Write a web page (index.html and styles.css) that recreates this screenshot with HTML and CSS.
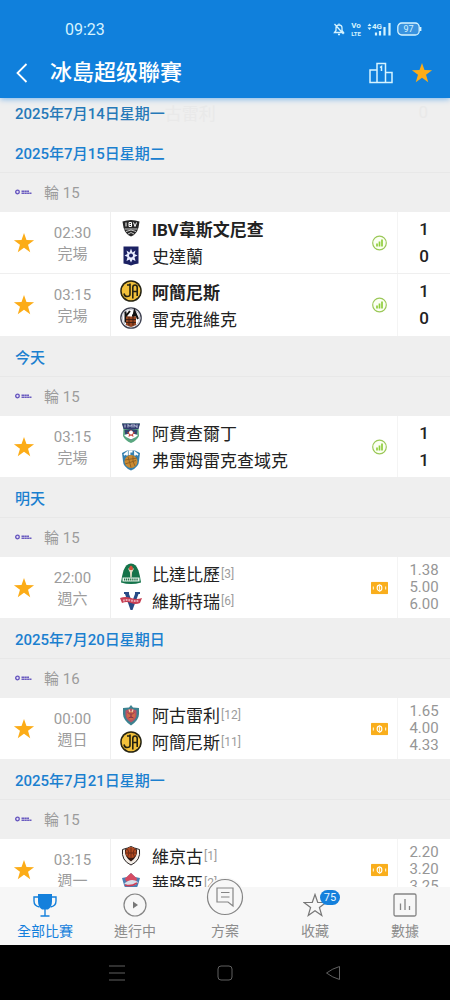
FILE: index.html
```
<!DOCTYPE html>
<html lang="zh-Hant">
<head>
<meta charset="UTF-8" />
<meta name="viewport" content="width=device-width, initial-scale=1.0" />
<title>冰島超级聯賽</title>
<link rel="stylesheet" href="styles.css">
</head>
<body>

<!-- shared icons and club badges -->
<svg class="sprite" aria-hidden="true">
    <symbol id="star" viewBox="0 0 24 24"><path d="M12 1l2.700 7.800 8.300.2-6.600 5 2.400 8L12 17.300 5.200 22l2.400-8L1 9l8.300-.2z"/></symbol>
    <symbol id="league" viewBox="0 0 17 6">
        <circle cx="2.500" cy="3" r="1.800" fill="#e4def5" stroke="#6352bd" stroke-width="1.300"/>
        <path d="M6.500 2.200h7.500M6.500 4.200h10" stroke="#6b5cc0" stroke-width="1.600" stroke-dasharray="2.500 .3"/>
    </symbol>
    <symbol id="stats" viewBox="0 0 16 16">
        <circle cx="8" cy="8" r="6.800" fill="#fbfff3" stroke="#9bc858" stroke-width="1.200"/>
        <path d="M5.500 11.500V8.500M8 11.500V6.500M10.500 11.500V4.500" stroke="#8fce3c" stroke-width="1.700"/>
    </symbol>
    <symbol id="cash" viewBox="0 0 18 13">
        <rect width="18" height="13" rx="1" fill="#f9ae1c"/>
        <ellipse cx="9" cy="6.500" rx="2.500" ry="3" fill="none" stroke="#fff" stroke-width="1.200"/>
        <path d="M9 2.500v8M2.500 5v3M15.500 5v3" stroke="#fff3d0" stroke-width="1.200"/>
    </symbol>
    <symbol id="ibv" viewBox="0 0 22 22">
        <path d="M2.500 3.500q8.500-3 17 0l-1 6q-2 7-7.500 9-5.500-2-7.500-9z" fill="#262626"/>
        <path d="M6 4.500v4M9 4.500v4h2.500v-4zM9 6.500h2.500M13.500 4.500l1.500 4 1.500-4" fill="none" stroke="#fff" stroke-width="1"/>
        <path d="M4.500 11h13M6 13.500l5-1.500 5 1.500M8 16l3-1.500 3 1.500" fill="none" stroke="#ddd" stroke-width=".9"/>
    </symbol>
    <symbol id="stjarnan" viewBox="0 0 22 22">
        <path d="M3.500 1.500h15v17q-4 .5-7.500 2-3.500-1.500-7.500-2z" fill="#1b2163"/>
        <path d="M11 3.500l1.500 4 3-2-1 3.500 3 1.500-3 1.500 1 4-3-1.500-1.500 3-1.500-3-3 1.500 1-4-3-1.500 3-1.500-1-3.500 3 2z" fill="#e9edff"/>
        <circle cx="11" cy="10.500" r="2" fill="#1b2163"/>
    </symbol>
    <symbol id="ia" viewBox="0 0 22 22">
        <circle cx="11" cy="11" r="10.800" fill="#252312"/>
        <circle cx="11" cy="11" r="9.300" fill="#f2c13b"/>
        <path d="M10 3.500v11q0 2-3 2-2.500 0-3-3M12.800 18.500V7.500q0-2.500 2.200-2.500t2.200 2.500V16M13 11.500h4M7 5h3" fill="none" stroke="#252312" stroke-width="1.600"/>
    </symbol>
    <symbol id="kr" viewBox="0 0 22 22">
        <circle cx="11" cy="11" r="10.200" fill="#fff" stroke="#3d4050" stroke-width="1.300"/>
        <circle cx="11" cy="11" r="8.600" fill="#fff" stroke="#8b8da0" stroke-width=".5"/>
        <path d="M5.500 4.500v11M10 4l-4 5 3 4M13 11l1.500-7 3.500 8M12 8.500h5" fill="none" stroke="#111" stroke-width="2"/>
        <path d="M6 9.500h10V18l-5 2-5-2z" fill="#9a4722"/>
        <path d="M6 12.500h10M6 15.500h10M9 9.500v9M13 9.500v9" stroke="#3b1d12" stroke-width=".9"/>
    </symbol>
    <symbol id="hafnar" viewBox="0 0 22 22">
        <path d="M2 1.500h18l-1.500 4.500.5 8q-2 4.500-8 7-6-2.500-8-7l.5-8z" fill="#5aa780"/>
        <path d="M2 1.500h18L18.500 7h-15z" fill="#333d70"/>
        <path d="M5 2.500v3M8 5.500v-3l2 2 2-2v3M14 5.500v-3l3 3v-3" fill="none" stroke="#e8ecff" stroke-width=".8"/>
        <path d="M4.500 8l6.500-1 6.500 1-1 6-5.500 4-5.500-4z" fill="#33436e"/>
        <path d="M4 13l7-2 7 2-2 2-5 2.500-5-2.500z" fill="#fff"/>
        <path d="M11 7.500l1.500 2.500 2.500.5-2 2 .5 2.500-2.500-1.500-2.500 1.500.5-2.500-2-2 2.500-.5z" fill="#c9473e"/>
        <circle cx="11" cy="10.500" r="2" fill="#fff"/>
    </symbol>
    <symbol id="fram" viewBox="0 0 22 22">
        <path d="M2 4l5-2.500h8L20 4l-1 8q0 6-8 9.500Q3 18 3 12z" fill="#337fae"/>
        <path d="M4 6l3-2.500v3M9.500 6V2.500h3M15 6.500v-3L18 6" fill="none" stroke="#fff" stroke-width="1.800"/>
        <circle cx="11" cy="12.500" r="6.500" fill="#c98a32"/>
        <path d="M5 11l12-2M5 15l11-3.500M8 7.500l3 11M13 7q-1 6 2 10" fill="none" stroke="#8b5d22" stroke-width=".9"/>
    </symbol>
    <symbol id="breida" viewBox="0 0 22 22">
        <path d="M11 .5q5 0 7.500 7 1.500 5 2.500 12-10 3-20 0 1-7 2.500-12Q6 .5 11 .5z" fill="#14734a"/>
        <path d="M8 5.500h6l-2 4-.3 5h-1.400l-.3-5z" fill="#e7dfc8"/>
        <path d="M11 2.500q3 2 1.500 4.500h-3Q8 4.500 11 2.500z" fill="#d4513b"/>
        <path d="M2.500 14.500h17v4h-17z" fill="#e4f2e9"/>
        <path d="M4 16.500h14" stroke="#24724b" stroke-width="2" stroke-dasharray="1.200 .7"/>
    </symbol>
    <symbol id="vestri" viewBox="0 0 22 22">
        <path d="M4 2h5v2l3 8 3-8V2h5v2h-1.500L12.500 20h-2L5 4H4z" fill="#274b86"/>
        <path d="M0 8q5.500-2 11 0t11 0l-2 5q-4.500 2-9 0t-9 0z" fill="#c63e52"/>
        <path d="M3 10.500q4-1 8 0t8 0" fill="none" stroke="#e9a8b4" stroke-width="2" stroke-dasharray="1.800 .9"/>
    </symbol>
    <symbol id="vikingurA" viewBox="0 0 22 22">
        <path d="M11 1l2 2.500 6 .5v6q0 6-8 11.500Q3 16 3 10V4l6-.5z" fill="#3c8290"/>
        <path d="M11 4.500l5.500 2V11q0 4-5.500 7.500Q5.500 15 5.500 11V6.500z" fill="#ba5362"/>
        <circle cx="11" cy="11.500" r="4.200" fill="#ce6a48"/>
        <path d="M8 8.500l2 2M14 8.500l-2 2M8.500 14q2.500-2 5 0M11 9v5" fill="none" stroke="#87304b" stroke-width="1"/>
        <path d="M9 5.500l1 2.500M13 5.500L12 8" stroke="#f3d8ac" stroke-width="1.200"/>
    </symbol>
    <symbol id="vikingurR" viewBox="0 0 22 22">
        <path d="M2.500 4.500l5-1.500L11 1.500 14.500 3l5 1.500q1.500 11-8.500 15.500Q1 15.500 2.500 4.500z" fill="#f4eee8" stroke="#272323" stroke-width="1"/>
        <path d="M5 4.500l3-1.500h6l3 1.500q1 7-6 12-7-5-6-12z" fill="#2d1813"/>
        <circle cx="11" cy="7.500" r="5.500" fill="#b34a20"/>
        <path d="M6 8h10M11 2.500v12M7.500 4q3 4 0 8M14.500 4q-3 4 0 8" fill="none" stroke="#5a2413" stroke-width=".8"/>
    </symbol>
    <symbol id="valur" viewBox="0 0 22 22">
        <path d="M2 6l5-1 4-4 4 4 5 1-2 7q-2 6-7 8-5-2-7-8z" fill="#4c7fb4"/>
        <path d="M5 6.500L11 1l6 5.500-1 3H6z" fill="#d64c63"/>
        <path d="M4 12q7-7 14-2-3 6-14 2z" fill="#d8dfea"/>
        <path d="M5 13q6 2 12-2" stroke="#cc3f57" stroke-width="1.600" fill="none"/>
    </symbol>
</svg>

<div class="app">
    <header class="header">
        <div class="status-bar">
            <span class="clock">09:23</span>
            <div class="status-icons">
                <svg width="12" height="14" viewBox="0 0 12 14" fill="none" stroke="#d5f3ff" stroke-width="1.300">
                    <path d="M1.500 10.500h9L9 8.500V6q0-3-3-3T3 6v2.500zM6 1.500V3M5 12.500h2M1.500 2l9 10"/>
                </svg>
                <svg width="10" height="14" viewBox="0 0 10 14">
                    <text x="5" y="6" font-size="8">Vo</text>
                    <text x="5" y="14" font-size="6">LTE</text>
                </svg>
                <svg width="24" height="14" viewBox="0 0 24 14">
                    <path d="M.5 4l2-2.500 2 2.500zM.5 5.500h4l-2 2.500z" fill="#d5f3ff"/>
                    <text x="10" y="7" font-size="8">4G</text>
                    <path d="M9 13.500v-3M13 13.500V9M17.500 13.500V5M22.500 13.500V1" stroke="#d5f3ff" stroke-width="2.200"/>
                </svg>
                <svg class="battery" width="25" height="14" viewBox="0 0 25 14">
                    <rect x=".8" y="1" width="21.400" height="12" rx="4" fill="#3a93df" stroke="#d5f3ff" stroke-width="1.300"/>
                    <path d="M23.500 5v4" stroke="#d5f3ff" stroke-width="1.800"/>
                    <text x="11.500" y="10" font-size="9">97</text>
                </svg>
            </div>
        </div>
        <div class="title-bar">
            <button class="icon-btn" aria-label="返回">
                <svg width="12" height="20" viewBox="0 0 12 20" fill="none" stroke="#fff" stroke-width="1.800"><path d="M10.500 1L1.500 10l9 9"/></svg>
            </button>
            <h1>冰島超级聯賽</h1>
            <button class="icon-btn" aria-label="積分榜">
                <svg width="24" height="22" viewBox="0 0 24 22" fill="none" stroke="#d6f4ff" stroke-width="1.500">
                    <path d="M8 20.500V1.500h8.500v19M8 8H1v12.500h22V10.500h-6.500M11 5.500l1.500-1V9"/>
                </svg>
            </button>
            <button class="icon-btn fav" aria-label="收藏聯賽"><svg width="22" height="22"><use href="#star"/></svg></button>
        </div>
    </header>

    <main class="match-list">
        <div class="date-row stuck">
            <h2>2025年7月14日星期一</h2>
            <span class="ghost-team" aria-hidden="true">古雷利</span>
            <span class="ghost-score" aria-hidden="true">0</span>
        </div>

        <section>
            <h2 class="date-row">2025年7月15日星期二</h2>
            <div class="league-row"><svg width="17" height="6"><use href="#league"/></svg>輪 15</div>
            <article class="match">
                <button class="fav" aria-label="收藏"><svg width="22" height="22"><use href="#star"/></svg></button>
                <div class="time"><span>02:30</span><span>完場</span></div>
                <div class="teams">
                    <div class="team winner"><svg><use href="#ibv"/></svg>IBV韋斯文尼查</div>
                    <div class="team"><svg><use href="#stjarnan"/></svg>史達蘭</div>
                </div>
                <svg class="extra" viewBox="0 0 16 16"><use href="#stats"/></svg>
                <div class="score"><span>1</span><span>0</span></div>
            </article>
            <article class="match">
                <button class="fav" aria-label="收藏"><svg width="22" height="22"><use href="#star"/></svg></button>
                <div class="time"><span>03:15</span><span>完場</span></div>
                <div class="teams">
                    <div class="team winner"><svg><use href="#ia"/></svg>阿簡尼斯</div>
                    <div class="team"><svg><use href="#kr"/></svg>雷克雅維克</div>
                </div>
                <svg class="extra" viewBox="0 0 16 16"><use href="#stats"/></svg>
                <div class="score"><span>1</span><span>0</span></div>
            </article>
        </section>

        <section>
            <h2 class="date-row">今天</h2>
            <div class="league-row"><svg width="17" height="6"><use href="#league"/></svg>輪 15</div>
            <article class="match">
                <button class="fav" aria-label="收藏"><svg width="22" height="22"><use href="#star"/></svg></button>
                <div class="time"><span>03:15</span><span>完場</span></div>
                <div class="teams">
                    <div class="team"><svg><use href="#hafnar"/></svg>阿費查爾丁</div>
                    <div class="team"><svg><use href="#fram"/></svg>弗雷姆雷克查域克</div>
                </div>
                <svg class="extra" viewBox="0 0 16 16"><use href="#stats"/></svg>
                <div class="score"><span>1</span><span>1</span></div>
            </article>
        </section>

        <section>
            <h2 class="date-row">明天</h2>
            <div class="league-row"><svg width="17" height="6"><use href="#league"/></svg>輪 15</div>
            <article class="match">
                <button class="fav" aria-label="收藏"><svg width="22" height="22"><use href="#star"/></svg></button>
                <div class="time"><span>22:00</span><span>週六</span></div>
                <div class="teams">
                    <div class="team"><svg><use href="#breida"/></svg>比達比歷<small>[3]</small></div>
                    <div class="team"><svg><use href="#vestri"/></svg>維斯特瑞<small>[6]</small></div>
                </div>
                <svg class="extra" viewBox="0 0 18 13"><use href="#cash"/></svg>
                <div class="odds"><span>1.38</span><span>5.00</span><span>6.00</span></div>
            </article>
        </section>

        <section>
            <h2 class="date-row">2025年7月20日星期日</h2>
            <div class="league-row"><svg width="17" height="6"><use href="#league"/></svg>輪 16</div>
            <article class="match">
                <button class="fav" aria-label="收藏"><svg width="22" height="22"><use href="#star"/></svg></button>
                <div class="time"><span>00:00</span><span>週日</span></div>
                <div class="teams">
                    <div class="team"><svg><use href="#vikingurA"/></svg>阿古雷利<small>[12]</small></div>
                    <div class="team"><svg><use href="#ia"/></svg>阿簡尼斯<small>[11]</small></div>
                </div>
                <svg class="extra" viewBox="0 0 18 13"><use href="#cash"/></svg>
                <div class="odds"><span>1.65</span><span>4.00</span><span>4.33</span></div>
            </article>
        </section>

        <section>
            <h2 class="date-row">2025年7月21日星期一</h2>
            <div class="league-row"><svg width="17" height="6"><use href="#league"/></svg>輪 15</div>
            <article class="match">
                <button class="fav" aria-label="收藏"><svg width="22" height="22"><use href="#star"/></svg></button>
                <div class="time"><span>03:15</span><span>週一</span></div>
                <div class="teams">
                    <div class="team"><svg><use href="#vikingurR"/></svg>維京古<small>[1]</small></div>
                    <div class="team"><svg><use href="#valur"/></svg>華路亞<small>[2]</small></div>
                </div>
                <svg class="extra" viewBox="0 0 18 13"><use href="#cash"/></svg>
                <div class="odds"><span>2.20</span><span>3.20</span><span>3.25</span></div>
            </article>
        </section>
    </main>

    <nav class="tabs">
        <button class="tab active">
            <svg width="24" height="24" viewBox="0 0 24 24">
                <path d="M5 1h14v7q0 6-4 8.500H9Q5 14 5 8z" fill="#1480dc"/>
                <path d="M5 4H1v4q0 5 5.500 6M19 4h4v4q0 5-5.500 6M12 16v6.500M7.500 23h9" fill="none" stroke="#1480dc" stroke-width="1.400"/>
            </svg>
            全部比賽
        </button>
        <button class="tab">
            <svg width="24" height="24" viewBox="0 0 24 24"><circle cx="12" cy="12" r="11" fill="none" stroke="#858585" stroke-width="1.200"/><path d="M10 8.500l5 3.500-5 3.500z" fill="#777"/></svg>
            進行中
        </button>
        <button class="tab plan">
            <svg width="40" height="40" viewBox="0 0 40 40" fill="none" stroke="#858585" stroke-width="1.200">
                <circle cx="20" cy="20" r="19.500" fill="#f7f7f7" stroke="none"/>
                <circle cx="20" cy="20" r="17.500"/>
                <path d="M12 11h16v18l-5-4H12zM16 15.500h8.500M16 20h8.500"/>
            </svg>
            方案
        </button>
        <button class="tab">
            <svg width="24" height="24" viewBox="0 0 24 24"><path d="M12 1.500l2.700 7.800 8.300.2-6.600 5 2.400 8L12 17.800l-6.800 4.700 2.400-8L1 9.500l8.300-.2z" fill="none" stroke="#777" stroke-width="1.200"/></svg>
            收藏
            <span class="badge">75</span>
        </button>
        <button class="tab">
            <svg width="24" height="24" viewBox="0 0 24 24" fill="none" stroke="#858585" stroke-width="1.300"><rect x="1" y="1" width="22" height="22" rx="1.500"/><path d="M7.500 10.500V17M12 6v11M16.500 13v4"/></svg>
            數據
        </button>
    </nav>

    <div class="system-nav">
        <button aria-label="最近"><svg width="16" height="16" viewBox="0 0 16 16"><path d="M0 1h16M0 8h16M0 15h16"/></svg></button>
        <button aria-label="主畫面"><svg width="16" height="16" viewBox="0 0 16 16"><rect x="1" y="1" width="14" height="14" rx="3"/></svg></button>
        <button aria-label="返回"><svg width="16" height="16" viewBox="0 0 16 16"><path d="M14.500 1.500v13q-7-2-13-6.500 6-4.500 13-6.500z"/></svg></button>
    </div>
</div>

</body>
</html>
```
FILE: styles.css
```
/* Reset and base styles */
* {margin: 0; padding: 0; box-sizing: border-box;}
body {
    font-family: Roboto, "Noto Sans CJK TC", sans-serif;
    background: #efefef;
    color: #222;
}
button {
    background: none;
    border: none;
    font: inherit;
    color: inherit;
    cursor: pointer;
}
svg {display: block; flex-shrink: 0;}
.sprite {position: absolute; width: 0; height: 0;}
.app {
    height: 100vh;
    display: flex;
    flex-direction: column;
}

/* Header */
.header {
    background: #1080dc;
    color: #fff;
    position: relative;
    z-index: 1;
    box-shadow: 0 1px 6px #78b4ea;
}
.status-bar {
    display: flex;
    justify-content: space-between;
    align-items: center;
    padding: 18px 28px 0 65px;
    height: 40px;
    color: #d5f3ff;
}
.clock {font-size: 16px;}
.status-icons {
    display: flex;
    align-items: center;
    gap: 6px;
}
.status-icons svg {overflow: visible;}
.status-icons text {
    fill: #d5f3ff;
    font-weight: 700;
    text-anchor: middle;
}
.status-icons .battery text {font-weight: 400;}
.title-bar {
    display: flex;
    align-items: center;
    height: 58px;
    padding: 8px 8px 0 6px;
}
.title-bar h1 {
    flex: 1;
    margin-left: 12px;
    font-size: 22px;
    font-weight: 500;
    line-height: 30px;
}
.icon-btn {
    width: 32px;
    height: 32px;
    display: flex;
    align-items: center;
    justify-content: center;
}
.title-bar .fav {
    width: 40px;
    margin-left: 5px;
}
.fav {fill: #fcac17;}

/* Match list */
.match-list {
    flex: 1;
    min-height: 0;
    overflow: hidden;
}
.date-row {
    display: flex;
    align-items: center;
    height: 40px;
    padding: 0 15px;
    border-bottom: 1px solid #e8e8e8;
    background: #efefef;
    color: #1b80cf;
    font-size: 15px;
    font-weight: 500;
}
.stuck {
    height: 35px;
    padding: 0 22px 7px 15px;
    border-bottom: none;
    color: #2679b8;
}
.stuck h2 {
    font-size: 15px;
    font-weight: 500;
}
.ghost-team, .ghost-score {
    color: #e9e9e9;
    font-size: 17px;
    font-weight: 400;
}
.ghost-score {margin-left: auto;}
.league-row {
    display: flex;
    align-items: center;
    gap: 12px;
    height: 39px;
    padding: 0 15px 2px;
    color: #9c9c9c;
    font-size: 15px;
}
.match {
    display: grid;
    grid-template-columns: 48px 63px 1fr 36px 53px;
    align-items: center;
    height: 62px;
    background: #fff;
    border-bottom: 1px solid #efefef;
}
.match + .match {height: 63px;}
.match .fav {
    display: flex;
    justify-content: center;
}
.time {
    align-self: stretch;
    display: flex;
    flex-direction: column;
    justify-content: center;
    padding: 2px 13px 0 0;
    border-right: 1px solid #efefef;
    color: #9c9c9c;
    font-size: 15px;
    line-height: 21px;
    text-align: center;
}
.teams {
    padding: 0 0 1px 9px;
    white-space: nowrap;
}
.team {
    display: flex;
    align-items: center;
    height: 27px;
    font-size: 17px;
}
.team svg {
    width: 22px;
    height: 22px;
    margin-right: 10px;
}
.team small {
    margin-left: 1px;
    color: #9c9c9c;
    font-size: 12px;
}
.winner {font-weight: 700;}
.extra {
    width: 17px;
    height: 16px;
    justify-self: center;
}
.score, .odds {
    align-self: stretch;
    display: flex;
    flex-direction: column;
    justify-content: center;
    border-left: 1px solid #f4f4f4;
    text-align: center;
}
.score {
    font-size: 17px;
    font-weight: 500;
    line-height: 27px;
}
.odds {
    color: #969696;
    font-size: 15px;
    line-height: 17px;
}

/* Bottom tabs */
.tabs {
    display: grid;
    grid-template-columns: repeat(5, 1fr);
    height: 58px;
    background: #f7f7f7;
    position: relative;
    z-index: 1;
}
.tab {
    position: relative;
    display: flex;
    flex-direction: column;
    align-items: center;
    justify-content: flex-end;
    gap: 4px;
    padding-bottom: 4px;
    color: #8c8c8c;
    font-size: 14px;
    line-height: 20px;
}
.tab.active {color: #1480dc;}
/* the round plan button sticks out above the bar */
.plan svg {margin-top: -10px;}
.badge {
    position: absolute;
    top: 3px;
    left: calc(50% + 5px);
    width: 20px;
    height: 15px;
    border-radius: 8px;
    background: #1480dc;
    color: #e6f5ff;
    font-size: 11px;
    line-height: 15px;
    text-align: center;
}

/* Android navigation */
.system-nav {
    display: flex;
    justify-content: center;
    align-items: center;
    gap: 92px;
    height: 55px;
    background: #000;
}
.system-nav svg {
    fill: none;
    stroke: #606060;
    stroke-width: 1;
}
```
